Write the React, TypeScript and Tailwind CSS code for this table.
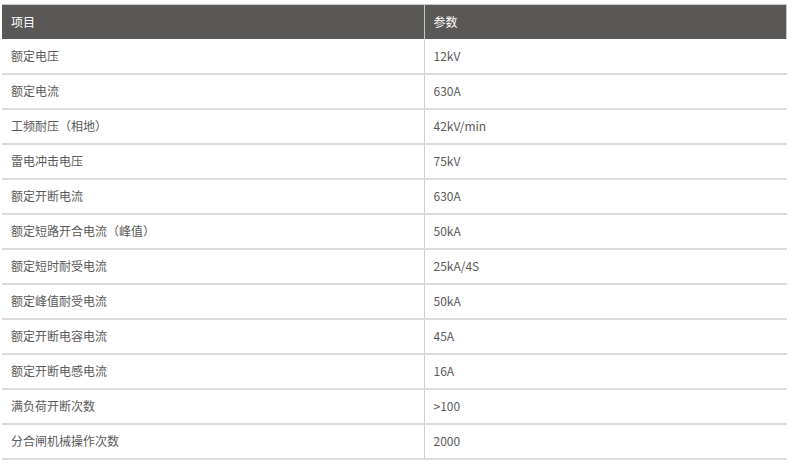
const rows: [string, string][] = [
  ["额定电压", "12kV"],
  ["额定电流", "630A"],
  ["工频耐压（相地）", "42kV/min"],
  ["雷电冲击电压", "75kV"],
  ["额定开断电流", "630A"],
  ["额定短路开合电流（峰值）", "50kA"],
  ["额定短时耐受电流", "25kA/4S"],
  ["额定峰值耐受电流", "50kA"],
  ["额定开断电容电流", "45A"],
  ["额定开断电感电流", "16A"],
  ["满负荷开断次数", ">100"],
  ["分合闸机械操作次数", "2000"],
];

export default function App() {
  return (
    <div
      className="w-[794px] h-[469px] bg-white pt-[4px] pl-[2px]"
      style={{ fontFamily: '"Noto Sans CJK SC", "Noto Sans", sans-serif' }}
    >
      <table className="w-[785px] border-collapse text-[12px]">
        <thead>
          <tr className="h-[34px] bg-[#595856] text-white border-t border-r border-[#c8c8c8]">
            <th className="w-[422px] pl-[9px] text-left font-normal">项目</th>
            <th className="pl-[9px] text-left font-normal border-l border-[#c8c8c8]">参数</th>
          </tr>
        </thead>
        <tbody className="text-[#5a5a5a]">
          {rows.map(([label, value]) => (
            <tr key={label} className="h-[35px] border-b-2 border-[#dcdcdc]">
              <td className="pl-[9px]">{label}</td>
              <td className="pl-[9px] border-l border-[#cfcfcf]">{value}</td>
            </tr>
          ))}
        </tbody>
      </table>
    </div>
  );
}
